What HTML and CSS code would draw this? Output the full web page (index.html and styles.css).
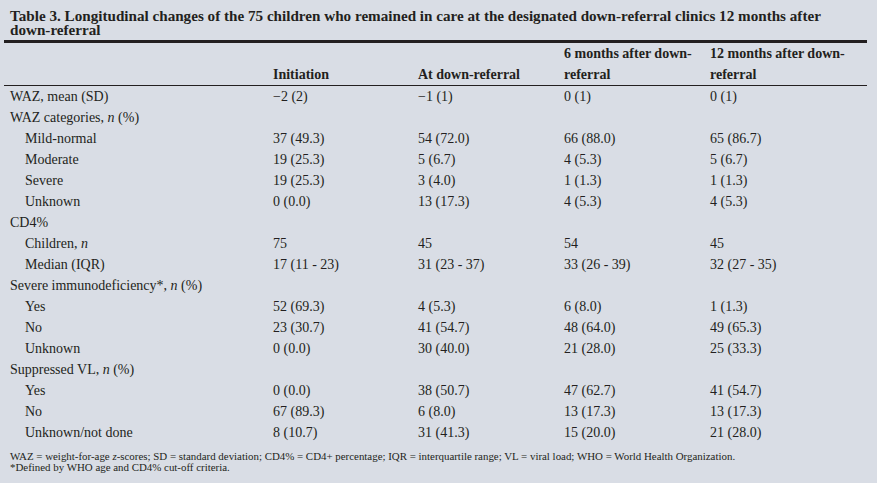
FILE: index.html
```html
<!DOCTYPE html>
<html>
<head>
<meta charset="utf-8">
<link rel="stylesheet" href="styles.css">
</head>
<body>
<div class="page">
  <h1 class="title">Table 3. Longitudinal changes of the 75 children who remained in care at the designated down-referral clinics 12 months after down-referral</h1>
  <table class="tbl">
    <colgroup>
      <col class="c-label"><col class="c-a"><col class="c-b"><col class="c-c"><col class="c-d">
    </colgroup>
    <thead>
      <tr class="head-top">
        <th></th><th></th><th></th><th>6 months after down-</th><th>12 months after down-</th>
      </tr>
      <tr class="head-bot">
        <th></th><th>Initiation</th><th>At down-referral</th><th>referral</th><th>referral</th>
      </tr>
    </thead>
    <tbody>
      <tr><td>WAZ, mean (SD)</td><td>−2 (2)</td><td>−1 (1)</td><td>0 (1)</td><td>0 (1)</td></tr>
      <tr><td>WAZ categories, <i>n</i> (%)</td><td></td><td></td><td></td><td></td></tr>
      <tr><td class="ind">Mild-normal</td><td>37 (49.3)</td><td>54 (72.0)</td><td>66 (88.0)</td><td>65 (86.7)</td></tr>
      <tr><td class="ind">Moderate</td><td>19 (25.3)</td><td>5 (6.7)</td><td>4 (5.3)</td><td>5 (6.7)</td></tr>
      <tr><td class="ind">Severe</td><td>19 (25.3)</td><td>3 (4.0)</td><td>1 (1.3)</td><td>1 (1.3)</td></tr>
      <tr><td class="ind">Unknown</td><td>0 (0.0)</td><td>13 (17.3)</td><td>4 (5.3)</td><td>4 (5.3)</td></tr>
      <tr><td>CD4%</td><td></td><td></td><td></td><td></td></tr>
      <tr><td class="ind">Children, <i>n</i></td><td>75</td><td>45</td><td>54</td><td>45</td></tr>
      <tr><td class="ind">Median (IQR)</td><td>17 (11 - 23)</td><td>31 (23 - 37)</td><td>33 (26 - 39)</td><td>32 (27 - 35)</td></tr>
      <tr><td>Severe immunodeficiency*, <i>n</i> (%)</td><td></td><td></td><td></td><td></td></tr>
      <tr><td class="ind">Yes</td><td>52 (69.3)</td><td>4 (5.3)</td><td>6 (8.0)</td><td>1 (1.3)</td></tr>
      <tr><td class="ind">No</td><td>23 (30.7)</td><td>41 (54.7)</td><td>48 (64.0)</td><td>49 (65.3)</td></tr>
      <tr><td class="ind">Unknown</td><td>0 (0.0)</td><td>30 (40.0)</td><td>21 (28.0)</td><td>25 (33.3)</td></tr>
      <tr><td>Suppressed VL, <i>n</i> (%)</td><td></td><td></td><td></td><td></td></tr>
      <tr><td class="ind">Yes</td><td>0 (0.0)</td><td>38 (50.7)</td><td>47 (62.7)</td><td>41 (54.7)</td></tr>
      <tr><td class="ind">No</td><td>67 (89.3)</td><td>6 (8.0)</td><td>13 (17.3)</td><td>13 (17.3)</td></tr>
      <tr><td class="ind">Unknown/not done</td><td>8 (10.7)</td><td>31 (41.3)</td><td>15 (20.0)</td><td>21 (28.0)</td></tr>
    </tbody>
  </table>
  <div class="notes">
    <p>WAZ = weight-for-age <i>z</i>-scores; SD = standard deviation; CD4% = CD4+ percentage; IQR = interquartile range; VL = viral load; WHO = World Health Organization.</p>
    <p>*Defined by WHO age and CD4% cut-off criteria.</p>
  </div>
</div>
</body>
</html>
```
FILE: styles.css
```css
html, body {
  margin: 0;
  padding: 0;
  background: #d9dde5;
}
body {
  width: 877px;
  height: 483px;
  overflow: hidden;
  font-family: "Liberation Serif", "Times New Roman", serif;
  color: #231f20;
}
.page {
  padding: 9px 10px 0 4px;
}
.title {
  margin: 0;
  padding: 0 27px 3px 6px;
  font-size: 15.15px;
  line-height: 14px;
  font-weight: bold;
  width: 830px;
  border-bottom: 3px solid #231f20;
}
.tbl {
  border-collapse: collapse;
  table-layout: fixed;
  width: 863px;
  font-size: 14px;
}
.c-label { width: 269px; }
.c-a { width: 145px; }
.c-b { width: 146px; }
.c-c { width: 146px; }
.c-d { width: 157px; }
.tbl th, .tbl td {
  padding: 0;
  height: 21px;
  line-height: 21px;
  text-align: left;
  white-space: nowrap;
  vertical-align: middle;
}
.tbl th {
  font-weight: bold;
}
.head-top th {
  height: 20px;
}
.head-bot th {
  border-bottom: 1px solid #231f20;
}
.tbl td:first-child {
  padding-left: 6px;
}
.tbl td.ind {
  padding-left: 21px;
}
.notes {
  padding: 8px 0 0 6px;
  font-size: 10.9px;
  line-height: 11px;
}
.notes p {
  margin: 0;
}
```
